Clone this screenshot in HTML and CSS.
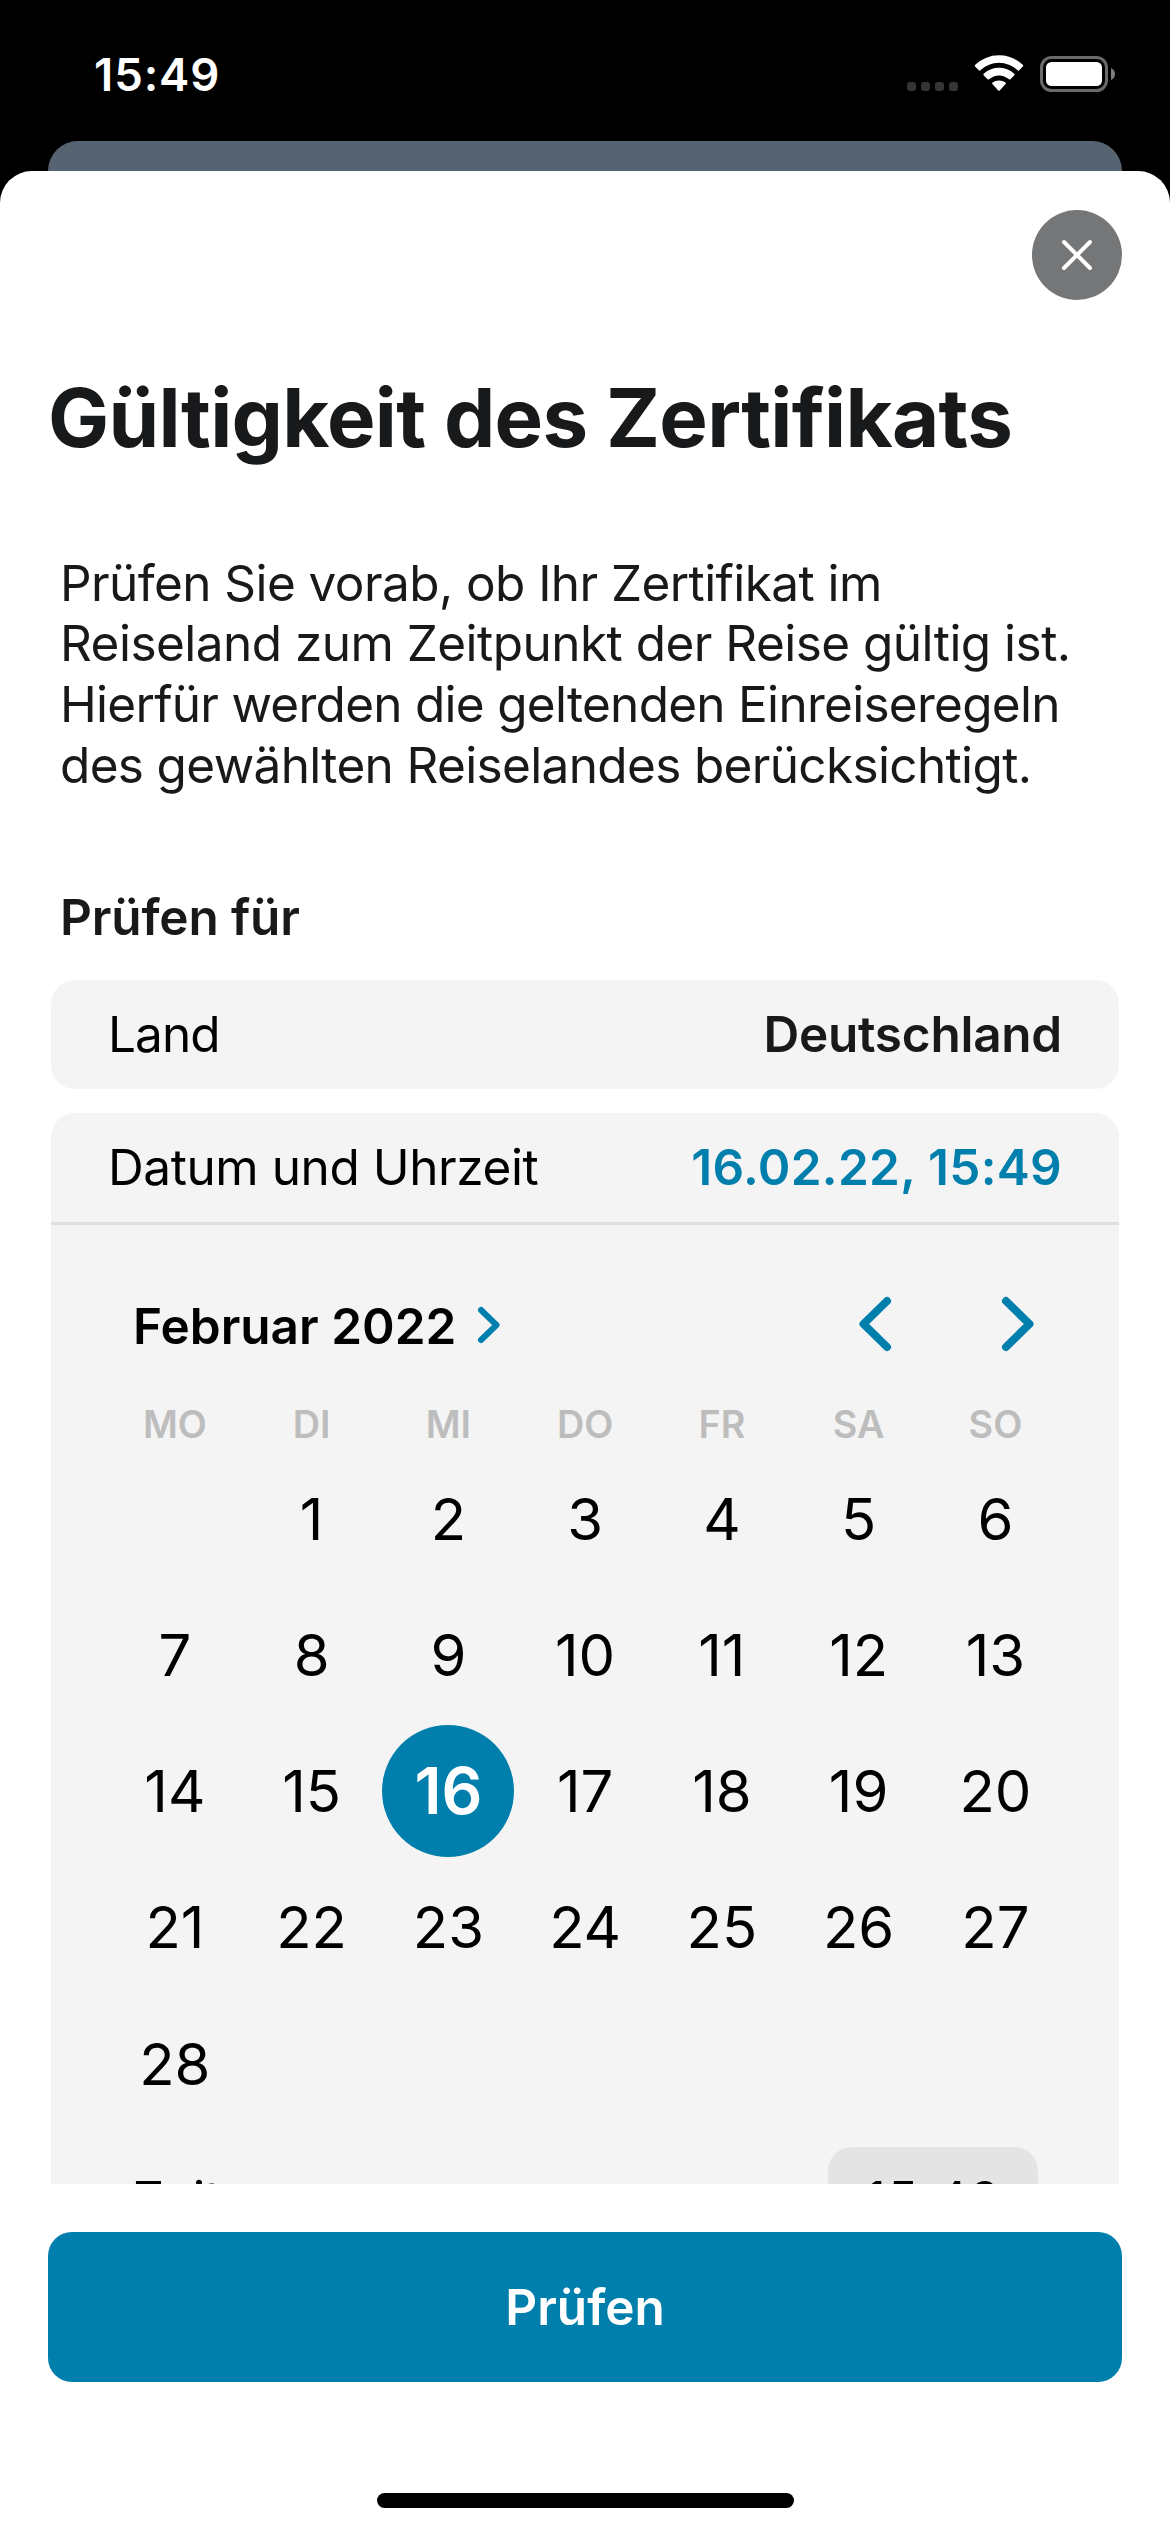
FILE: index.html
```html
<!DOCTYPE html>
<html lang="de">
<head>
<meta charset="utf-8">
<title>Gültigkeit des Zertifikats</title>
<link rel="stylesheet" href="styles.css">
</head>
<body>
<header class="status">
  <span class="status-time">15:49</span>
  <svg class="status-icons" width="210" height="40" viewBox="906 54 210 40">
    <g fill="#333534"><rect x="907" y="82" width="9" height="9" rx="3"/><rect x="921" y="82" width="9" height="9" rx="3"/><rect x="935" y="82" width="9" height="9" rx="3"/><rect x="949" y="82" width="9" height="9" rx="3"/></g>
    <g fill="#fff">
      <path d="M975.2 64.8Q985.5 55.2 999 55.2Q1012.500 55.2 1022.800 64.8Q1023.600 65.600 1022.900 66.500L1019 70.400Q1018.400 71 1017.600 70.300Q1009.500 62.800 999 62.800Q988.500 62.800 980.400 70.300Q979.600 71 979 70.400L975.100 66.500Q974.400 65.600 975.200 64.800Z"/>
      <path d="M983.700 73.700Q990.500 67.800 999 67.800Q1007.500 67.800 1014.300 73.700Q1015 74.400 1014.400 75.200L1010.400 79.200Q1009.700 79.800 1009 79.200Q1004.500 75.400 999 75.400Q993.500 75.400 989 79.200Q988.300 79.800 987.600 79.200L983.600 75.200Q983 74.400 983.700 73.700Z"/>
      <path d="M992.500 82.500Q995.300 80.400 999 80.400Q1002.700 80.400 1005.500 82.500Q1006.300 83.200 1005.600 84L999.700 90.500Q999 91.200 998.300 90.500L992.400 84Q991.700 83.200 992.500 82.500Z"/>
    </g>
    <rect x="1041.500" y="57.500" width="65" height="33" rx="10" fill="none" stroke="#6a6a6a" stroke-width="3"/>
    <rect x="1046" y="62" width="56" height="24" rx="5.500" fill="#fff"/>
    <path d="M1111 68Q1115 70 1115 74Q1115 78 1111 80Z" fill="#7e7e7e"/>
  </svg>
</header>
<div class="sheet-behind"></div>
<main class="sheet">
  <div class="scroll">
    <div class="close-row">
      <button class="close" aria-label="Schließen"><svg width="34" height="34" viewBox="0 0 34 34"><path d="M4 4L30 30M30 4L4 30" stroke="#fff" stroke-width="4" stroke-linecap="round"/></svg></button>
    </div>
    <h1 class="title">Gültigkeit des Zertifikats</h1>
    <p class="intro"><span class="l1">Prüfen Sie vorab, ob Ihr Zertifikat im</span><br><span class="l2">Reiseland zum Zeitpunkt der Reise gültig ist.</span><br><span class="l3">Hierfür werden die geltenden Einreiseregeln</span><br><span class="l4">des gewählten Reiselandes berücksichtigt.</span></p>
    <h2 class="subtitle">Prüfen für</h2>
    <section class="card row"><span class="land">Land</span><strong class="country">Deutschland</strong></section>
    <section class="card picker">
      <div class="row ruled"><span class="label">Datum und Uhrzeit</span><strong class="date">16.02.22, 15:49</strong></div>
      <div class="month">
        <span class="month-name">Februar 2022</span>
        <svg class="more" width="24" height="38" viewBox="0 0 24 38"><path d="M4 4L19.500 19L4 34"/></svg>
        <svg class="prev" width="34" height="56" viewBox="0 0 34 56"><path d="M29 5L5.500 28L29 51"/></svg>
        <svg class="next" width="34" height="56" viewBox="0 0 34 56"><path d="M5 5L28.500 28L5 51"/></svg>
      </div>
      <div class="grid weekdays"><span>MO</span><span>DI</span><span>MI</span><span>DO</span><span>FR</span><span>SA</span><span>SO</span></div>
      <div class="grid days">
        <span></span><span>1</span><span>2</span><span>3</span><span>4</span><span>5</span><span>6</span>
        <span>7</span><span>8</span><span>9</span><span>10</span><span>11</span><span>12</span><span>13</span>
        <span>14</span><span>15</span><span class="selected">16</span><span>17</span><span>18</span><span>19</span><span>20</span>
        <span>21</span><span>22</span><span>23</span><span>24</span><span>25</span><span>26</span><span>27</span>
        <span>28</span>
      </div>
      <div class="time"><span>Zeit</span><span class="time-pill">15:49</span></div>
    </section>
  </div>
  <footer class="footer">
    <button class="submit">Prüfen</button>
    <div class="home"></div>
  </footer>
</main>
</body>
</html>
```

FILE: styles.css
```css
* { box-sizing: border-box; margin: 0; padding: 0; }
html { background: #000; }
body {
  width: 1170px; height: 2532px; overflow: hidden;
  display: flex; flex-direction: column;
  background: #000; color: #18191b;
  font-family: Inter, "Liberation Sans", sans-serif;
  font-size: 49.5px; line-height: 60px;
}
button { border: 0; font: inherit; color: #fff; }
svg { display: block; flex: none; }
.status {
  height: 141px; flex: none; padding: 44px 54px 0 94px;
  display: flex; justify-content: space-between; align-items: flex-start;
  color: #fff;
}
.status-time { font-size: 45.5px; font-weight: 600; line-height: 61px; letter-spacing: 0.9px; }
.status-icons { margin-top: 10px; }
.sheet-behind { height: 30px; flex: none; margin: 0 48px; border-radius: 30px 30px 0 0; background: #566370; }
.sheet {
  flex: 1; min-height: 0; display: flex; flex-direction: column;
  background: #fff; border-radius: 32px 32px 0 0;
}
.scroll { flex: 1; min-height: 0; overflow: hidden; padding: 39px 51px 0; }
.close-row { display: flex; justify-content: flex-end; margin-right: -3px; }
.close {
  width: 90px; height: 90px; border-radius: 50%; background: #757678;
  display: flex; align-items: center; justify-content: center;
}
.title { margin: 68px 0 0 -3px; font-size: 81.5px; line-height: 99px; font-weight: 700; letter-spacing: -0.72px; white-space: nowrap; }
.intro { margin: 85.5px 0 0 9px; line-height: 60.85px; white-space: nowrap; }
.l1 { letter-spacing: -0.58px; }
.l2 { letter-spacing: -0.53px; }
.l3 { letter-spacing: -0.72px; }
.l4 { letter-spacing: -0.65px; }
.subtitle { margin: 91px 0 33px 9px; font-size: inherit; font-weight: 600; letter-spacing: -0.15px; }
.card { background: #f4f4f4; border-radius: 24px; }
.row {
  height: 109px; padding: 0 57px; color: #000;
  display: flex; align-items: center; justify-content: space-between;
}
.row strong { font-weight: 600; }
.land { letter-spacing: -0.9px; }
.row .country { color: #18191b; letter-spacing: -0.25px; }
.label { letter-spacing: -0.42px; }
.row .date { color: #007fad; letter-spacing: 0.3px; }
.picker { margin-top: 24px; }
.ruled { height: 112px; border-bottom: 3px solid #dfdfdf; }
.month { height: 60px; margin: 71px 84px 0 82px; display: flex; align-items: center; color: #000; font-weight: 600; }
.month path { fill: none; stroke: #007fad; stroke-width: 6; stroke-linecap: round; stroke-linejoin: round; }
.month .prev path, .month .next path { stroke-width: 8; }
.more { margin: 0 auto 2px 21px; }
.prev { margin: 0 109px 3px 0; }
.next { margin-bottom: 3px; }
.grid { display: grid; grid-template-columns: repeat(7, 136.75px); margin-left: 55.5px; text-align: center; }
.weekdays { margin-top: 48.5px; line-height: 40px; font-size: 37.8px; font-weight: 600; color: #bdbdbe; }
.days {
  margin-top: 6px; grid-auto-rows: 136.3px; align-items: center; justify-items: center;
  font-size: 58px; color: #000;
}
.selected {
  width: 132px; height: 132px; border-radius: 50%; line-height: 132px;
  background: #007fad; color: #fff; font-size: 64px; font-weight: 600;
}
.time { margin: 15.5px 81px 0 82px; display: flex; align-items: center; justify-content: space-between; color: #000; }
.time-pill { width: 210px; line-height: 104px; border-radius: 24px; background: #e4e4e4; text-align: center; letter-spacing: 2px; text-indent: 2px; }
.footer { height: 348px; flex: none; padding: 48px 48px 0; display: flex; flex-direction: column; align-items: center; }
.submit { width: 100%; height: 150px; border-radius: 24px; background: #007fad; font-weight: 600; }
.home { width: 417px; height: 15px; margin-top: 111px; border-radius: 8px; background: #000; }
```
